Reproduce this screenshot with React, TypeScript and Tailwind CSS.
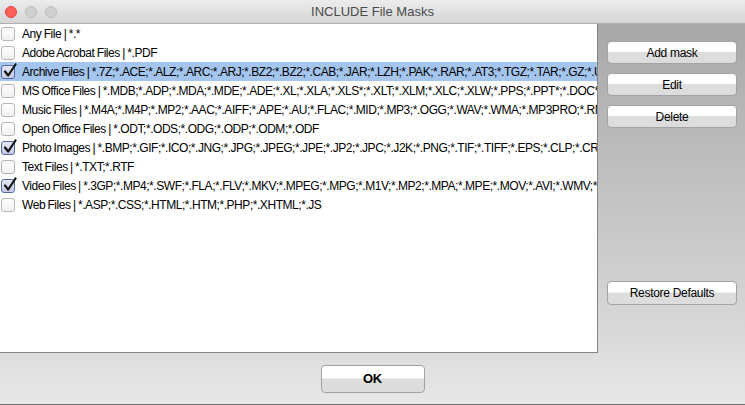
import React from 'react';

const masks = [
  { label: 'Any File | *.*', checked: false },
  { label: 'Adobe Acrobat Files | *.PDF', checked: false },
  {
    label:
      'Archive Files | *.7Z;*.ACE;*.ALZ;*.ARC;*.ARJ;*.BZ2;*.BZ2;*.CAB;*.JAR;*.LZH;*.PAK;*.RAR;*.AT3;*.TGZ;*.TAR;*.GZ;*.UUE;*.XXE;*.ZIP',
    checked: true,
    selected: true,
  },
  {
    label:
      'MS Office Files | *.MDB;*.ADP;*.MDA;*.MDE;*.ADE;*.XL;*.XLA;*.XLS*;*.XLT;*.XLM;*.XLC;*.XLW;*.PPS;*.PPT*;*.DOC*;*.DOT*',
    checked: false,
  },
  {
    label:
      'Music Files | *.M4A;*.M4P;*.MP2;*.AAC;*.AIFF;*.APE;*.AU;*.FLAC;*.MID;*.MP3;*.OGG;*.WAV;*.WMA;*.MP3PRO;*.RM;*.RA',
    checked: false,
  },
  { label: 'Open Office Files | *.ODT;*.ODS;*.ODG;*.ODP;*.ODM;*.ODF', checked: false },
  {
    label:
      'Photo Images | *.BMP;*.GIF;*.ICO;*.JNG;*.JPG;*.JPEG;*.JPE;*.JP2;*.JPC;*.J2K;*.PNG;*.TIF;*.TIFF;*.EPS;*.CLP;*.CRW;*.CR2',
    checked: true,
  },
  { label: 'Text Files | *.TXT;*.RTF', checked: false },
  {
    label:
      'Video Files | *.3GP;*.MP4;*.SWF;*.FLA;*.FLV;*.MKV;*.MPEG;*.MPG;*.M1V;*.MP2;*.MPA;*.MPE;*.MOV;*.AVI;*.WMV;*.ASF',
    checked: true,
  },
  { label: 'Web Files | *.ASP;*.CSS;*.HTML;*.HTM;*.PHP;*.XHTML;*.JS', checked: false },
];

const CheckBox = ({ checked }: { checked: boolean }) =>
  checked ? (
    <div className="relative w-[14px] h-[14px] shrink-0 rounded-[3px] border border-[#5566a8] bg-gradient-to-b from-[#e4e8f4] to-[#c3cbe6]">
      <svg className="absolute left-[1px] top-[-3px]" width="14" height="15" viewBox="0 0 14 15">
        <path d="M2 8.5 L5.2 12.5 L12.5 1.5" fill="none" stroke="#111" strokeWidth="2.2" strokeLinecap="round" strokeLinejoin="round" />
      </svg>
    </div>
  ) : (
    <div className="w-[14px] h-[14px] shrink-0 rounded-[3px] border border-[#b4b4b4] bg-gradient-to-b from-white to-[#f1f1f1]" />
  );

const MacButton = ({ label, bold = false, className = '' }: { label: string; bold?: boolean; className?: string }) => (
  <button
    className={`flex items-center justify-center rounded-[4px] border border-[#a3a3a3] bg-[linear-gradient(#ffffff_0%,#ffffff_45%,#dedede_50%,#dcdcdc_100%)] text-black tracking-[-0.3px] ${
      bold ? 'font-bold text-[13px]' : 'text-[12px]'
    } ${className}`}
  >
    {label}
  </button>
);

export default function App() {
  return (
    <div
      className="w-[745px] h-[405px] flex flex-col overflow-hidden bg-[#e8e8e8]"
      style={{ fontFamily: '"Liberation Sans", Arial, sans-serif' }}
    >
      {/* title bar */}
      <div className="relative h-[24px] shrink-0 flex items-center justify-center bg-gradient-to-b from-[#ececec] to-[#d6d6d6] border-b border-[#b1b1b1]">
        <div className="absolute left-[5px] top-[6px] flex gap-[8px]">
          <div className="w-[12px] h-[12px] rounded-full bg-[#fc5f57] border border-[#df4641]" />
          <div className="w-[12px] h-[12px] rounded-full bg-[#d0d0d0] border border-[#bdbdbd]" />
          <div className="w-[12px] h-[12px] rounded-full bg-[#d0d0d0] border border-[#bdbdbd]" />
        </div>
        <span className="text-[13px] text-[#4a4a4a]">INCLUDE File Masks</span>
      </div>

      {/* body */}
      <div className="flex-1 flex flex-col bg-[linear-gradient(#a8a8a8_0%,#d8d8d8_80%,#e8e8e8_100%)]">
        <div className="flex flex-1">
          <div className="w-[598px] h-[329px] bg-white border-r border-b border-[#858585] overflow-hidden">
            {masks.map((m) => (
              <div
                key={m.label}
                className={`h-[19px] flex items-center pl-[1px] gap-[7px] whitespace-nowrap text-[12px] tracking-[-0.45px] [word-spacing:-0.5px] text-black ${
                  m.selected ? 'bg-[#a4c5ee]' : ''
                }`}
              >
                <CheckBox checked={m.checked} />
                <span>{m.label}</span>
              </div>
            ))}
          </div>
          <div className="flex-1 flex flex-col pl-[9px] pr-[8px] pt-[17px]">
            <MacButton label="Add mask" className="h-[23px] w-full" />
            <MacButton label="Edit" className="h-[23px] w-full mt-[9px]" />
            <MacButton label="Delete" className="h-[23px] w-full mt-[9px]" />
            <MacButton label="Restore Defaults" className="h-[24px] w-full mt-[153px]" />
          </div>
        </div>
        <div className="h-[52px] shrink-0 flex justify-center pt-[12px] border-b border-[#6f6f6f]">
          <MacButton label="OK" bold className="w-[104px] h-[28px]" />
        </div>
      </div>
    </div>
  );
}
